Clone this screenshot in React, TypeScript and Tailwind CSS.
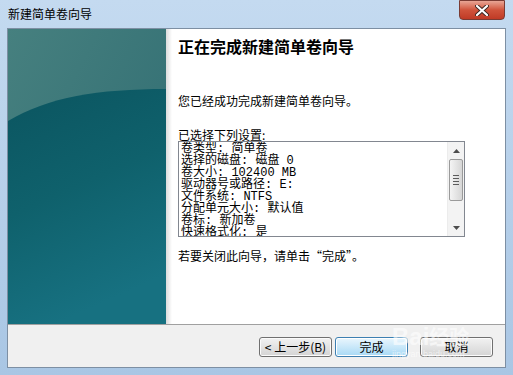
import React from 'react';

const cjk = '"Noto Sans CJK SC", "Liberation Sans", sans-serif';
const mono = '"Liberation Mono", "Noto Sans CJK SC", monospace';

function SidePanel() {
  // teal wizard banner with the Aero arc
  return (
    <div className="w-[158px] h-full shrink-0">
      <svg width="158" height="295" viewBox="0 0 158 295" className="block">
        <defs>
          <linearGradient id="top" x1="0" y1="0" x2="1" y2="1">
            <stop offset="0" stopColor="#46807f" />
            <stop offset="1" stopColor="#2e6b71" />
          </linearGradient>
          <linearGradient id="body" x1="0" y1="0" x2="0.3" y2="1">
            <stop offset="0" stopColor="#0b5560" />
            <stop offset="0.5" stopColor="#0f616c" />
            <stop offset="1" stopColor="#177181" />
          </linearGradient>
        </defs>
        <rect width="158" height="295" fill="url(#top)" />
        <path d="M0 92 C 40 68, 90 60, 158 60 L158 295 L0 295 Z" fill="url(#body)" />
      </svg>
    </div>
  );
}

function ScrollBar() {
  return (
    <div className="w-[17px] h-full shrink-0 flex flex-col bg-[#f3f3f3] border-l border-[#ececec]">
      <div className="h-[17px] flex items-center justify-center">
        <svg width="7" height="4" viewBox="0 0 7 4"><path d="M0 4 L3.5 0 L7 4 Z" fill="#4d4d4d" /></svg>
      </div>
      <div className="mx-[1px] h-[42px] rounded-[2px] border border-[#9a9a9a] bg-gradient-to-r from-[#f4f4f4] to-[#d6d6d6] flex flex-col items-center justify-center gap-[2px]">
        <div className="w-[6px] h-[1px] bg-[#5b5b5b]" />
        <div className="w-[6px] h-[1px] bg-[#5b5b5b]" />
        <div className="w-[6px] h-[1px] bg-[#5b5b5b]" />
        <div className="w-[6px] h-[1px] bg-[#5b5b5b]" />
      </div>
      <div className="flex-1" />
      <div className="h-[17px] flex items-center justify-center">
        <svg width="7" height="4" viewBox="0 0 7 4"><path d="M0 0 L3.5 4 L7 0 Z" fill="#4d4d4d" /></svg>
      </div>
    </div>
  );
}

function Button({ label, primary }: { label: string; primary?: boolean }) {
  return (
    <div
      className={`w-[73px] h-[20px] rounded-[3px] border flex items-center justify-center text-[12px] text-black ${
        primary
          ? 'border-[#3c7fb1] bg-gradient-to-b from-[#eaf6fd] to-[#a7d9f5] shadow-[inset_0_0_0_1px_#ffffff]'
          : 'border-[#707070] bg-gradient-to-b from-[#f2f2f2] to-[#d4d4d4] shadow-[inset_0_0_0_1px_#fbfbfb]'
      }`}
    >
      {label}
    </div>
  );
}

export default function App() {
  const lines = [
    '卷类型: 简单卷',
    '选择的磁盘: 磁盘 0',
    '卷大小: 102400 MB',
    '驱动器号或路径: E:',
    '文件系统: NTFS',
    '分配单元大小: 默认值',
    '卷标: 新加卷',
    '快速格式化: 是',
  ];

  return (
    <div
      className="w-[513px] h-[375px] relative overflow-hidden bg-gradient-to-b from-[#c4daf0] to-[#a9c6e4] flex flex-col"
      style={{ fontFamily: cjk }}
    >
      {/* title bar */}
      <div className="h-[29px] flex items-start shrink-0">
        <div className="pl-[8px] pt-[6px] text-[12px] text-black leading-[16px]">新建简单卷向导</div>
        <div className="flex-1" />
        <div className="mr-[8px] w-[46px] h-[20px] rounded-b-[4px] border border-[#7a3b33] bg-gradient-to-b from-[#e8a595] via-[#d0533b] to-[#c03a25] flex items-center justify-center">
          <svg width="14" height="11" viewBox="0 0 14 11">
            <path d="M2 1 L12 10 M12 1 L2 10" stroke="#3a2520" strokeWidth="4" strokeLinecap="round" />
            <path d="M2 1 L12 10 M12 1 L2 10" stroke="#ffffff" strokeWidth="2.2" strokeLinecap="round" />
          </svg>
        </div>
      </div>

      {/* client area */}
      <div className="mx-[8px] h-[338px] flex flex-col bg-[#f0f0f0] outline outline-1 outline-[#7d8fa3] shrink-0">
        <div className="h-[295px] flex">
          <SidePanel />
          <div className="flex-1 bg-white relative pl-[12px] pr-[10px]">
            <div className="absolute left-0 top-0 bottom-0 w-[6px] bg-gradient-to-r from-[#dcdcdc] to-white" />
            <div className="relative pt-[6px] text-[16px] font-bold leading-[22px] text-black">正在完成新建简单卷向导</div>
            <div className="relative mt-[36px] text-[12px] leading-[16px] text-black">您已经成功完成新建简单卷向导。</div>
            <div className="relative mt-[18px] text-[12px] leading-[16px] text-black">已选择下列设置:</div>
            <div className="relative mt-[-2px] w-[287px] h-[96px] border border-[#828790] flex bg-white">
              <div
                className="flex-1 overflow-hidden pl-[2px] pt-[1px] text-[12px] leading-[12px] text-black"
                style={{ fontFamily: mono }}
              >
                {lines.map(l => (
                  <div key={l} className="h-[12px] whitespace-nowrap">{l}</div>
                ))}
              </div>
              <ScrollBar />
            </div>
            <div className="relative mt-[11px] text-[12px] leading-[16px] text-black">若要关闭此向导，请单击“完成”。</div>
          </div>
        </div>
        <div className="h-[1px] bg-[#a0a0a0]" />
        <div className="flex-1 flex items-start pt-[12px] pr-[12px]">
          <div className="flex-1" />
          <Button label="< 上一步(B)" />
          <div className="w-[3px]" />
          <Button label="完成" primary />
          <div className="w-[12px]" />
          <Button label="取消" />
        </div>
      </div>

      {/* watermark */}
      <div className="absolute left-[392px] top-[325px] text-[24px] font-bold text-white/60 leading-none pointer-events-none" style={{ fontFamily: '"Liberation Sans", sans-serif' }}>
        Bai<span className="text-[20px]" style={{ fontFamily: cjk }}>经验</span>
      </div>
      <div className="absolute left-[392px] top-[350px] text-[9px] text-white/60 leading-none pointer-events-none" style={{ fontFamily: '"Liberation Sans", sans-serif' }}>
        jingyan.baidu.com
      </div>
    </div>
  );
}
